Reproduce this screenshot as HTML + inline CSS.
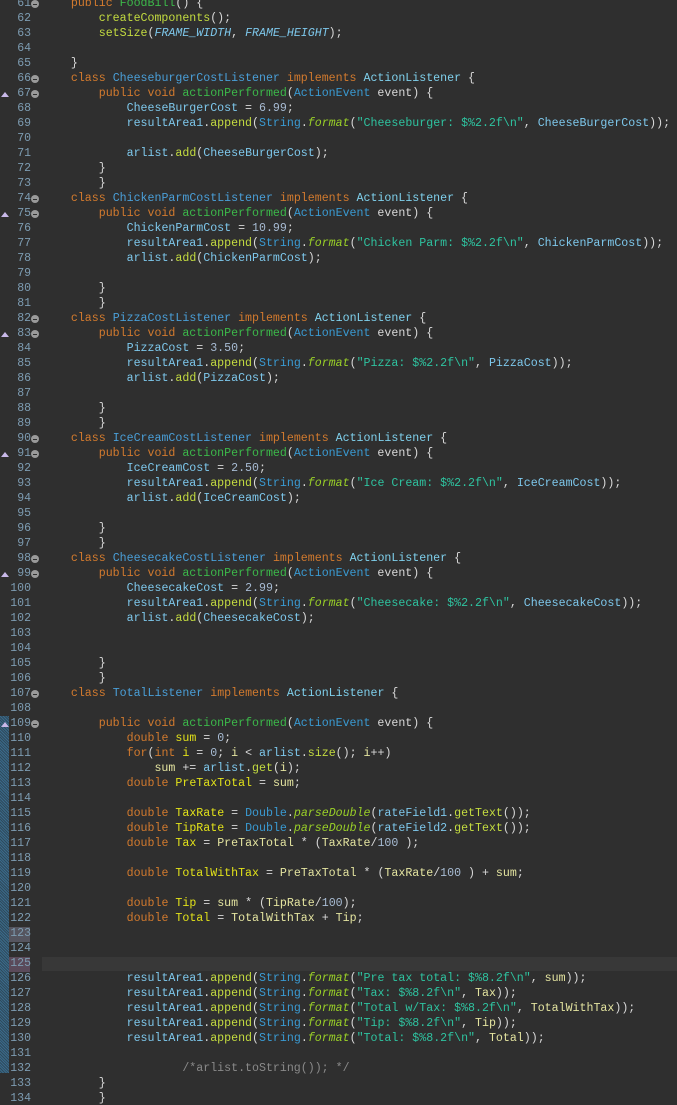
<!DOCTYPE html>
<html><head><meta charset="utf-8"><style>
html,body{margin:0;padding:0;background:#2f2f2f;width:677px;height:1105px;overflow:hidden}
#wrap{position:relative;width:677px;height:1105px}
.ln{position:absolute;left:0;width:31px;text-align:right;font:11.5px/15px "Liberation Mono",monospace;color:#7d9cb2}
pre{position:absolute;left:43px;top:-4px;margin:0;font:11.62px/15px "Liberation Mono",monospace;color:#d8d8d8;white-space:pre;text-shadow:0 0 0 #2f2f2f}
.k{color:#d27a2e}.c{color:#4a9fd8}.ci{color:#7fd0ec}.m{color:#3cb84a}.f{color:#7ec8ec}.v{color:#e2e21a}.u{color:#e4e4a0}
.s{color:#2fc3a0}.t{color:#3a9ad2}.i{color:#9ad028;font-style:italic}.a{color:#c4dc40}.n{color:#a8bcd4}.cm{color:#8a8a8a}.fi{color:#7ec8ec;font-style:italic}
.fold{position:absolute;left:31px;width:8px;height:8px;border-radius:50%;background:#9a9a9a}
.fold:after{content:"";position:absolute;left:2px;top:3.5px;width:4px;height:1px;background:#2f2f2f}
.tri{position:absolute;left:1px;width:0;height:0;border-left:4px solid transparent;border-right:4px solid transparent;border-bottom:5px solid #c8b8e8}
</style></head><body><div id="wrap">
<div style="position:absolute;left:0;top:716px;width:9px;height:357px;background:repeating-linear-gradient(45deg,#3a6a8a 0 1px,#2f4a5c 1px 2px)"></div>
<div style="position:absolute;left:9px;top:927px;width:21px;height:15px;background:#55555f"></div>
<div style="position:absolute;left:9px;top:957px;width:21px;height:15px;background:#5a4a5a"></div>
<div style="position:absolute;left:42px;top:957px;width:635px;height:14px;background:#383838"></div>
<pre><span class="k">    public</span> <span class="m">FoodBill</span>() {
        <span class="a">createComponents</span>();
        <span class="a">setSize</span>(<span class="fi">FRAME_WIDTH</span>, <span class="fi">FRAME_HEIGHT</span>);

    }
    <span class="k">class</span> <span class="c">CheeseburgerCostListener</span> <span class="k">implements</span> <span class="ci">ActionListener</span> {
        <span class="k">public void</span> <span class="m">actionPerformed</span>(<span class="t">ActionEvent</span> event) {
            <span class="f">CheeseBurgerCost</span> = <span class="n">6.99</span>;
            <span class="f">resultArea1</span>.<span class="a">append</span>(<span class="t">String</span>.<span class="i">format</span>(<span class="s">"Cheeseburger: $%2.2f\n"</span>, <span class="f">CheeseBurgerCost</span>));

            <span class="f">arlist</span>.<span class="a">add</span>(<span class="f">CheeseBurgerCost</span>);
        }
        }
    <span class="k">class</span> <span class="c">ChickenParmCostListener</span> <span class="k">implements</span> <span class="ci">ActionListener</span> {
        <span class="k">public void</span> <span class="m">actionPerformed</span>(<span class="t">ActionEvent</span> event) {
            <span class="f">ChickenParmCost</span> = <span class="n">10.99</span>;
            <span class="f">resultArea1</span>.<span class="a">append</span>(<span class="t">String</span>.<span class="i">format</span>(<span class="s">"Chicken Parm: $%2.2f\n"</span>, <span class="f">ChickenParmCost</span>));
            <span class="f">arlist</span>.<span class="a">add</span>(<span class="f">ChickenParmCost</span>);

        }
        }
    <span class="k">class</span> <span class="c">PizzaCostListener</span> <span class="k">implements</span> <span class="ci">ActionListener</span> {
        <span class="k">public void</span> <span class="m">actionPerformed</span>(<span class="t">ActionEvent</span> event) {
            <span class="f">PizzaCost</span> = <span class="n">3.50</span>;
            <span class="f">resultArea1</span>.<span class="a">append</span>(<span class="t">String</span>.<span class="i">format</span>(<span class="s">"Pizza: $%2.2f\n"</span>, <span class="f">PizzaCost</span>));
            <span class="f">arlist</span>.<span class="a">add</span>(<span class="f">PizzaCost</span>);

        }
        }
    <span class="k">class</span> <span class="c">IceCreamCostListener</span> <span class="k">implements</span> <span class="ci">ActionListener</span> {
        <span class="k">public void</span> <span class="m">actionPerformed</span>(<span class="t">ActionEvent</span> event) {
            <span class="f">IceCreamCost</span> = <span class="n">2.50</span>;
            <span class="f">resultArea1</span>.<span class="a">append</span>(<span class="t">String</span>.<span class="i">format</span>(<span class="s">"Ice Cream: $%2.2f\n"</span>, <span class="f">IceCreamCost</span>));
            <span class="f">arlist</span>.<span class="a">add</span>(<span class="f">IceCreamCost</span>);

        }
        }
    <span class="k">class</span> <span class="c">CheesecakeCostListener</span> <span class="k">implements</span> <span class="ci">ActionListener</span> {
        <span class="k">public void</span> <span class="m">actionPerformed</span>(<span class="t">ActionEvent</span> event) {
            <span class="f">CheesecakeCost</span> = <span class="n">2.99</span>;
            <span class="f">resultArea1</span>.<span class="a">append</span>(<span class="t">String</span>.<span class="i">format</span>(<span class="s">"Cheesecake: $%2.2f\n"</span>, <span class="f">CheesecakeCost</span>));
            <span class="f">arlist</span>.<span class="a">add</span>(<span class="f">CheesecakeCost</span>);


        }
        }
    <span class="k">class</span> <span class="c">TotalListener</span> <span class="k">implements</span> <span class="ci">ActionListener</span> {

        <span class="k">public void</span> <span class="m">actionPerformed</span>(<span class="t">ActionEvent</span> event) {
            <span class="k">double</span> <span class="v">sum</span> = <span class="n">0</span>;
            <span class="k">for</span>(<span class="k">int</span> <span class="v">i</span> = <span class="n">0</span>; <span class="u">i</span> &lt; <span class="f">arlist</span>.<span class="a">size</span>(); <span class="u">i</span>++)
                <span class="u">sum</span> += <span class="f">arlist</span>.<span class="a">get</span>(<span class="u">i</span>);
            <span class="k">double</span> <span class="v">PreTaxTotal</span> = <span class="u">sum</span>;

            <span class="k">double</span> <span class="v">TaxRate</span> = <span class="t">Double</span>.<span class="i">parseDouble</span>(<span class="f">rateField1</span>.<span class="a">getText</span>());
            <span class="k">double</span> <span class="v">TipRate</span> = <span class="t">Double</span>.<span class="i">parseDouble</span>(<span class="f">rateField2</span>.<span class="a">getText</span>());
            <span class="k">double</span> <span class="v">Tax</span> = <span class="u">PreTaxTotal</span> * (<span class="u">TaxRate</span>/<span class="n">100</span> );

            <span class="k">double</span> <span class="v">TotalWithTax</span> = <span class="u">PreTaxTotal</span> * (<span class="u">TaxRate</span>/<span class="n">100</span> ) + <span class="u">sum</span>;

            <span class="k">double</span> <span class="v">Tip</span> = <span class="u">sum</span> * (<span class="u">TipRate</span>/<span class="n">100</span>);
            <span class="k">double</span> <span class="v">Total</span> = <span class="u">TotalWithTax</span> + <span class="u">Tip</span>;



            <span class="f">resultArea1</span>.<span class="a">append</span>(<span class="t">String</span>.<span class="i">format</span>(<span class="s">"Pre tax total: $%8.2f\n"</span>, <span class="u">sum</span>));
            <span class="f">resultArea1</span>.<span class="a">append</span>(<span class="t">String</span>.<span class="i">format</span>(<span class="s">"Tax: $%8.2f\n"</span>, <span class="u">Tax</span>));
            <span class="f">resultArea1</span>.<span class="a">append</span>(<span class="t">String</span>.<span class="i">format</span>(<span class="s">"Total w/Tax: $%8.2f\n"</span>, <span class="u">TotalWithTax</span>));
            <span class="f">resultArea1</span>.<span class="a">append</span>(<span class="t">String</span>.<span class="i">format</span>(<span class="s">"Tip: $%8.2f\n"</span>, <span class="u">Tip</span>));
            <span class="f">resultArea1</span>.<span class="a">append</span>(<span class="t">String</span>.<span class="i">format</span>(<span class="s">"Total: $%8.2f\n"</span>, <span class="u">Total</span>));

                    <span class="cm">/*arlist.toString()); */</span>
        }
        }</pre>
<div class="ln" style="top:-4px">61<br>62<br>63<br>64<br>65<br>66<br>67<br>68<br>69<br>70<br>71<br>72<br>73<br>74<br>75<br>76<br>77<br>78<br>79<br>80<br>81<br>82<br>83<br>84<br>85<br>86<br>87<br>88<br>89<br>90<br>91<br>92<br>93<br>94<br>95<br>96<br>97<br>98<br>99<br>100<br>101<br>102<br>103<br>104<br>105<br>106<br>107<br>108<br>109<br>110<br>111<br>112<br>113<br>114<br>115<br>116<br>117<br>118<br>119<br>120<br>121<br>122<br>123<br>124<br>125<br>126<br>127<br>128<br>129<br>130<br>131<br>132<br>133<br>134</div>
<div class="fold" style="top:0px"></div>
<div class="fold" style="top:75px"></div>
<div class="fold" style="top:90px"></div>
<div class="fold" style="top:195px"></div>
<div class="fold" style="top:210px"></div>
<div class="fold" style="top:315px"></div>
<div class="fold" style="top:330px"></div>
<div class="fold" style="top:435px"></div>
<div class="fold" style="top:450px"></div>
<div class="fold" style="top:555px"></div>
<div class="fold" style="top:570px"></div>
<div class="fold" style="top:690px"></div>
<div class="fold" style="top:720px"></div>
<div class="tri" style="top:92px"></div>
<div class="tri" style="top:212px"></div>
<div class="tri" style="top:332px"></div>
<div class="tri" style="top:452px"></div>
<div class="tri" style="top:572px"></div>
<div class="tri" style="top:722px"></div>
</div></body></html>
